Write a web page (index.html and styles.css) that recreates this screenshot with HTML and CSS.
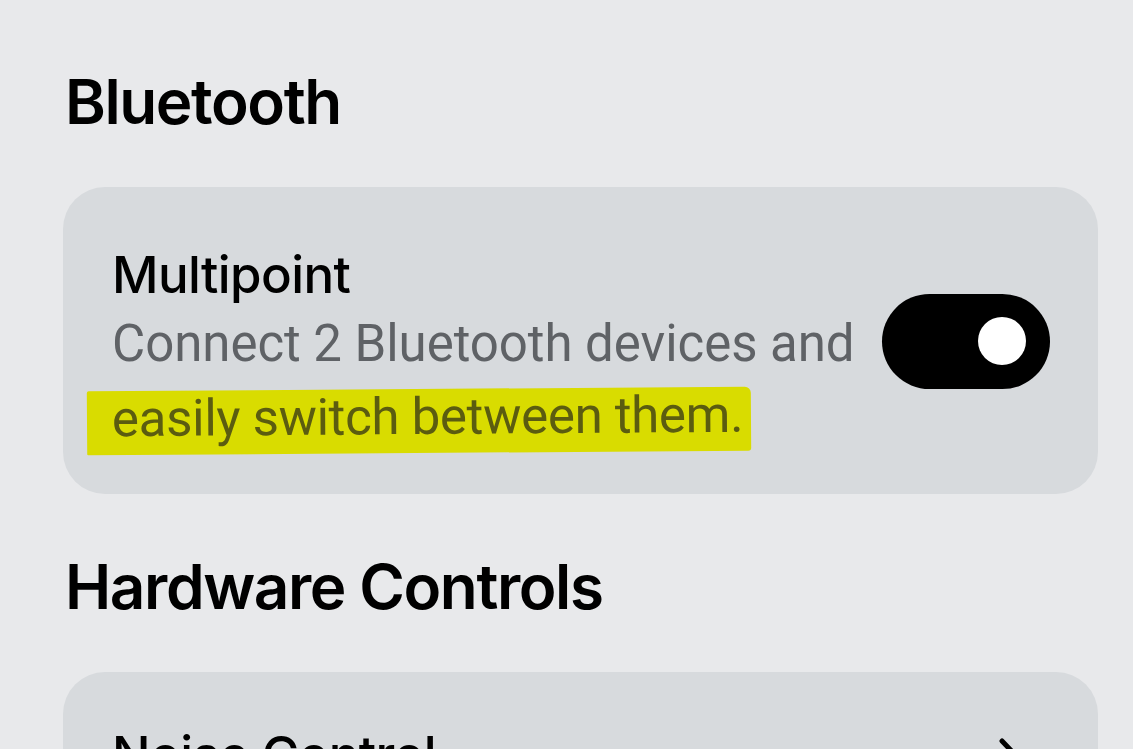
FILE: index.html
```html
<!DOCTYPE html>
<html lang="en">
<head>
    <meta charset="UTF-8">
    <title>Bluetooth</title>
    <link rel="stylesheet" href="styles.css">
</head>
<body>
    <div class="page">
        <h2 class="section-title">Bluetooth</h2>
        <div class="card">
            <div class="card-text">
                <div class="card-title">Multipoint</div>
                <div class="card-desc">Connect 2 Bluetooth devices and<br><span class="mark">easily switch between them.</span></div>
            </div>
            <div class="toggle"><div class="knob"></div></div>
        </div>

        <h2 class="section-title second">Hardware Controls</h2>
        <div class="card link">
            <div class="card-title">Noise Control</div>
            <svg class="chevron" width="30" height="52" viewBox="0 0 30 52">
                <path d="M4 4 L25 26 L4 48" fill="none" stroke="#000" stroke-width="5" stroke-linecap="round" stroke-linejoin="round"/>
            </svg>
        </div>
    </div>
</body>
</html>
```

FILE: styles.css
```css
body {
    margin: 0;
    background: #e8e9eb;
    font-family: 'Inter', sans-serif;
    color: #000;
    overflow: hidden;
    height: 749px;
}

.page {
    padding: 64px 35px 0 63px;
}

.section-title {
    margin: 0 0 0 2px;
    font-size: 62px;
    font-weight: 600;
    letter-spacing: -1.4px;
    line-height: 76px;
}

.section-title.second {
    margin-top: 55px;
}

.card {
    background: #d7dadd;
    border-radius: 42px;
    margin-top: 47px;
    padding: 58px 48px 41px 48px;
    display: flex;
    align-items: center;
    gap: 28px;
}

.card-text {
    flex: 1;
    min-width: 0;
    white-space: nowrap;
}

.card-title {
    font-size: 51px;
    font-weight: 500;
    line-height: 60px;
    letter-spacing: -0.6px;
    padding-left: 1px;
}

.card-desc {
    font-family: 'Roboto', sans-serif;
    font-size: 51px;
    line-height: 73px;
    letter-spacing: -0.05px;
    color: #5f6266;
    margin-top: 2px;
    padding-left: 1px;
}

.mark {
    display: inline-block;
    background: #d9dc00;
    color: #5b5c10;
    line-height: 56px;
    padding: 0 8px 8px 25px;
    margin-left: -25px;
    letter-spacing: -0.3px;
    border-radius: 2px 6px 3px 1px;
    transform: rotate(-0.4deg);
}

.toggle {
    width: 168px;
    height: 95px;
    background: #000;
    border-radius: 48px;
    display: flex;
    align-items: center;
    justify-content: flex-end;
    padding-right: 24px;
    box-sizing: border-box;
    flex-shrink: 0;
    margin-top: -16px;
}

.knob {
    width: 48px;
    height: 48px;
    border-radius: 50%;
    background: #fff;
}

.card.link {
    margin-top: 47px;
    justify-content: space-between;
    align-items: flex-start;
    padding-top: 53px;
    padding-right: 70px;
}

.chevron {
    margin-top: 12px;
}
```
